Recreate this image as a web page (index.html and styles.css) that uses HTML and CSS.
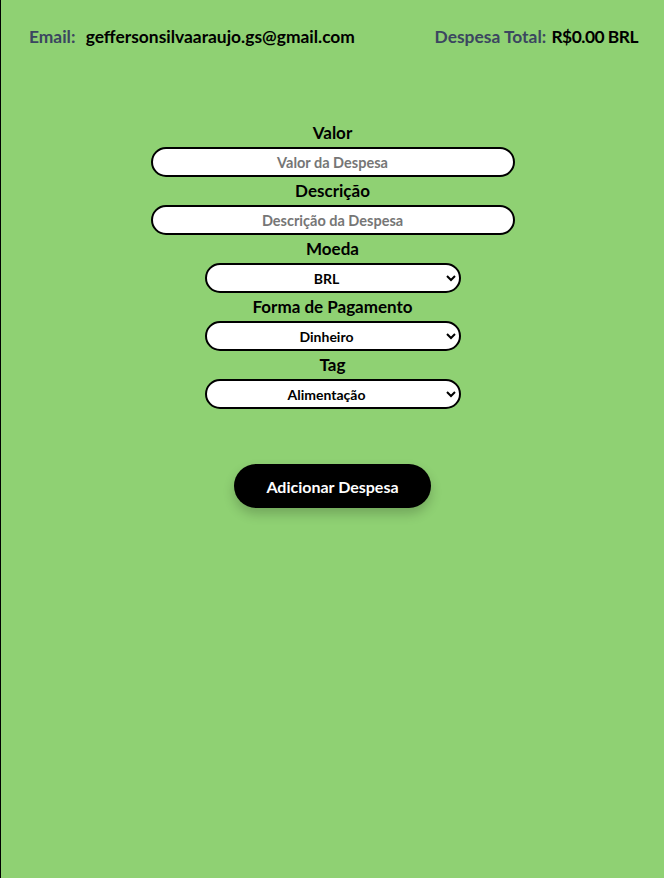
FILE: index.html
```
<!DOCTYPE html>
<html lang="pt-BR">
<head>
<meta charset="utf-8">
<title>Carteira</title>
<link rel="stylesheet" href="styles.css">
</head>
<body>
<div class="page">
  <header class="header">
    <p class="info"><span class="info-label">Email:</span> <span class="info-value">geffersonsilvaaraujo.gs@gmail.com</span></p>
    <p class="info"><span class="info-label info-label-tight">Despesa Total:</span> <span class="info-value info-total">R$0.00 BRL</span></p>
  </header>
  <form class="form">
    <label class="field">
      <span class="field-label">Valor</span>
      <input class="input" type="text" placeholder="Valor da Despesa">
    </label>
    <label class="field">
      <span class="field-label">Descrição</span>
      <input class="input" type="text" placeholder="Descrição da Despesa">
    </label>
    <label class="field">
      <span class="field-label">Moeda</span>
      <select class="select"><option>BRL</option></select>
    </label>
    <label class="field">
      <span class="field-label">Forma de Pagamento</span>
      <select class="select"><option>Dinheiro</option></select>
    </label>
    <label class="field">
      <span class="field-label">Tag</span>
      <select class="select"><option>Alimentação</option></select>
    </label>
    <button class="button" type="button">Adicionar Despesa</button>
  </form>
</div>
</body>
</html>
```
FILE: styles.css
```
html, body {
  margin: 0;
  padding: 0;
}
body {
  background: #8fd173;
  font-family: Lato, "Open Sans", sans-serif;
}
.page {
  min-height: 878px;
  box-sizing: border-box;
  border-left: 1px solid #000;
}
.header {
  display: flex;
  justify-content: space-between;
  align-items: center;
  padding: 27px 26px 0 28px;
}
.info {
  margin: 0;
  font-size: 17.4px;
  font-weight: 700;
  line-height: 20px;
}
.info-label {
  color: #3b4660;
  margin-right: 6px;
}
.info-label-tight {
  margin-right: 1px;
}
.info-value {
  color: #000;
}
.info-total {
  letter-spacing: -0.5px;
}
.form {
  display: flex;
  flex-direction: column;
  align-items: center;
  padding-top: 72px;
}
.field {
  display: flex;
  flex-direction: column;
  align-items: center;
}
.field-label {
  font-size: 17px;
  font-weight: 700;
  line-height: 28px;
  color: #000;
}
.input {
  width: 364px;
  height: 30px;
  box-sizing: border-box;
  border: 2px solid #000;
  border-radius: 15px;
  background: #fff;
  text-align: center;
  font-family: inherit;
  font-size: 14.5px;
  font-weight: 700;
  outline: none;
}
.input::placeholder {
  color: #767676;
}
.select {
  width: 256px;
  height: 30px;
  box-sizing: border-box;
  border: 2px solid #000;
  border-radius: 15px;
  background: #fff;
  text-align: center;
  text-align-last: center;
  font-family: inherit;
  font-size: 14px;
  font-weight: 700;
  color: #000;
  padding: 0 6px;
}
.button {
  margin-top: 55px;
  width: 197px;
  height: 44px;
  border: none;
  border-radius: 22px;
  background: #000;
  color: #fff;
  font-family: inherit;
  font-size: 16px;
  font-weight: 700;
  box-shadow: 0 6px 12px rgba(0, 0, 0, 0.2);
}
```
